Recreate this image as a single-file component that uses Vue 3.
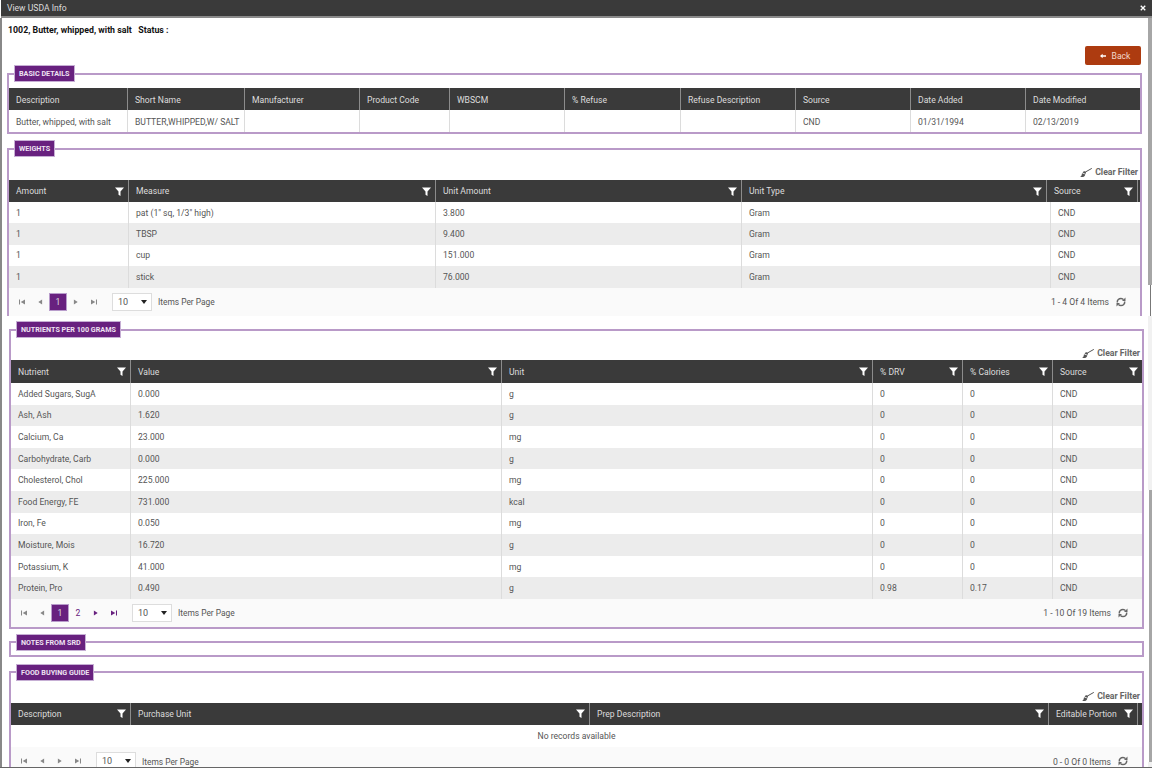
<script setup>
const panels = [
  {
    cls: 'panel-a',
    sections: [
      {
        title: 'BASIC DETAILS', cls: 'basic', filter: false,
        cols: [119, 117, 115, 90, 115, 116, 115, 115, 115, 113],
        head: ['Description', 'Short Name', 'Manufacturer', 'Product Code', 'WBSCM', '% Refuse', 'Refuse Description', 'Source', 'Date Added', 'Date Modified'],
        rows: [['Butter, whipped, with salt', 'BUTTER,WHIPPED,W/ SALT', '', '', '', '', '', 'CND', '01/31/1994', '02/13/2019']]
      },
      {
        title: 'WEIGHTS', cls: 'weights', filter: true, open: true, gutter: 2,
        cols: [120, 307, 306, 305, 91],
        rowCols: [120, 307, 306, 309, 89],
        head: ['Amount', 'Measure', 'Unit Amount', 'Unit Type', 'Source'],
        rows: [
          ['1', 'pat (1" sq, 1/3" high)', '3.800', 'Gram', 'CND'],
          ['1', 'TBSP', '9.400', 'Gram', 'CND'],
          ['1', 'cup', '151.000', 'Gram', 'CND'],
          ['1', 'stick', '76.000', 'Gram', 'CND']
        ],
        pager: { nums: [1], live: false, info: '1 - 4 Of 4 Items' }
      }
    ]
  },
  {
    cls: 'panel-b',
    sections: [
      {
        title: 'NUTRIENTS PER 100 GRAMS', cls: 'nutrients', filter: true,
        cols: [120, 371, 371, 90, 90, 89],
        head: ['Nutrient', 'Value', 'Unit', '% DRV', '% Calories', 'Source'],
        rows: [
          ['Added Sugars, SugA', '0.000', 'g', '0', '0', 'CND'],
          ['Ash, Ash', '1.620', 'g', '0', '0', 'CND'],
          ['Calcium, Ca', '23.000', 'mg', '0', '0', 'CND'],
          ['Carbohydrate, Carb', '0.000', 'g', '0', '0', 'CND'],
          ['Cholesterol, Chol', '225.000', 'mg', '0', '0', 'CND'],
          ['Food Energy, FE', '731.000', 'kcal', '0', '0', 'CND'],
          ['Iron, Fe', '0.050', 'mg', '0', '0', 'CND'],
          ['Moisture, Mois', '16.720', 'g', '0', '0', 'CND'],
          ['Potassium, K', '41.000', 'mg', '0', '0', 'CND'],
          ['Protein, Pro', '0.490', 'g', '0.98', '0.17', 'CND']
        ],
        pager: { nums: [1, 2], live: true, info: '1 - 10 Of 19 Items' }
      },
      { title: 'NOTES FROM SRD', cls: 'notes', empty: true },
      {
        title: 'FOOD BUYING GUIDE', cls: 'food', filter: true, open: true, gutter: 4,
        cols: [120, 459, 459, 89],
        head: ['Description', 'Purchase Unit', 'Prep Description', 'Editable Portion'],
        rows: [],
        none: 'No records available',
        pager: { nums: [], live: false, info: '0 - 0 Of 0 Items' }
      }
    ]
  }
]
const gridOf = (s) => ({ gridTemplateColumns: [...s.cols, ...(s.gutter ? [s.gutter] : [])].map((c) => c + 'px').join(' ') })
const rowGridOf = (s) => ({ gridTemplateColumns: (s.rowCols || s.cols).map((c) => c + 'px').join(' ') })
</script>

<template>
  <div class="screen">
    <header class="title">
      <span>View USDA Info</span>
      <svg class="close" viewBox="0 0 8 8" width="6" height="6"><path d="M1 1l6 6M7 1L1 7" stroke="#fff" stroke-width="1.8" /></svg>
    </header>
    <div class="work">
      <main class="main">
        <div v-for="panel in panels" :key="panel.cls" :class="['panel', panel.cls]">
          <template v-if="panel.cls === 'panel-a'">
            <div class="food-name">1002, Butter, whipped, with salt &nbsp; Status :</div>
            <div class="actions">
              <button class="back">
                <svg viewBox="0 0 8 8" width="6" height="6"><path d="M0 4l3.500-3v2H8v2H3.500v2z" fill="#fff" /></svg>
                <span>Back</span>
              </button>
            </div>
          </template>
          <fieldset v-for="s in panel.sections" :key="s.title" :class="['box', s.cls, { open: s.open }]">
            <legend>{{ s.title }}</legend>
            <template v-if="!s.empty">
              <div v-if="s.filter" class="clear">
                <svg viewBox="0 0 12 9" width="12" height="9">
                  <path d="M0 9c1.200-.5 1.800-2 2-3.800l3.400 1.400C4.900 8 4 9 3 9z" fill="#555" />
                  <path d="M2.600 4.600c.7-1.200 1.800-1.500 3-1l.5.500-.6 2z" fill="#555" />
                  <path d="M5.800 3.800L11.800.4" stroke="#555" stroke-width="1" fill="none" />
                </svg>
                <span>Clear Filter</span>
              </div>
              <div class="grid head" :style="gridOf(s)">
                <div v-for="h in s.head" :key="h" class="hcell">
                  <span>{{ h }}</span>
                  <svg v-if="s.filter" class="funnel" viewBox="0 0 9 9" width="9" height="9"><path d="M0 .5h9L5.500 4.500V9L3.500 7.800V4.500z" fill="#fff" /></svg>
                </div>
                <div v-if="s.gutter" class="hgutter"></div>
              </div>
              <div v-for="(r, i) in s.rows" :key="i" :class="['grid', 'row', { alt: i % 2 === 1 }]" :style="rowGridOf(s)">
                <div v-for="(c, j) in r" :key="j" class="cell">{{ c }}</div>
              </div>
              <div v-if="s.none" class="none">{{ s.none }}</div>
              <div v-if="s.pager" class="pager">
                <div class="nav">
                  <span class="pg">
                    <svg viewBox="0 0 7 7" width="6" height="6"><path d="M0 .5h1.200v6H0zM7 .5v6L2 3.500z" /></svg>
                  </span>
                  <span class="pg">
                    <svg viewBox="0 0 7 7" width="6" height="6"><path d="M6 .5v6L1.500 3.500z" /></svg>
                  </span>
                  <span v-for="n in s.pager.nums" :key="n" :class="['num', { on: n === 1 }]">{{ n }}</span>
                  <span :class="['pg', { live: s.pager.live }]">
                    <svg viewBox="0 0 7 7" width="6" height="6"><path d="M1 .5v6l4.500-3z" /></svg>
                  </span>
                  <span :class="['pg', { live: s.pager.live }]">
                    <svg viewBox="0 0 7 7" width="6" height="6"><path d="M0 .5v6l5-3zM5.800 .5H7v6H5.800z" /></svg>
                  </span>
                  <span class="select"><span>10</span><i></i></span>
                  <span class="per">Items Per Page</span>
                </div>
                <div class="info">
                  <span>{{ s.pager.info }}</span>
                  <svg viewBox="0 0 10 10" width="10" height="10" fill="none" stroke="#666" stroke-width="1.500">
                    <path d="M1.300 5.500C1 3 3 1.500 5 1.500c1 0 2 .4 2.500 1.200" />
                    <path d="M8.700 4.500C9 7 7 8.500 5 8.500c-1 0-2-.4-2.500-1.200" />
                    <path d="M9.500 .5v3.500H6z" fill="#666" stroke="none" />
                    <path d="M.5 9.500V6H4z" fill="#666" stroke="none" />
                  </svg>
                </div>
              </div>
            </template>
          </fieldset>
        </div>
      </main>
      <aside class="scroll">
        <div class="sb s1"></div>
        <div class="sb s2"></div>
        <div class="sb s3"></div>
        <div class="sb s4"></div>
        <div class="sb s5"></div>
      </aside>
    </div>
  </div>
</template>

<style>
html, body { margin: 0; background: #fff; }
</style>

<style scoped>
.screen {
  width: 1152px;
  height: 768px;
  box-sizing: border-box;
  border-bottom: 1px solid #666;
  font-family: Roboto, "Open Sans", sans-serif;
  font-size: 8.6px;
  color: #555;
  display: flex;
  flex-direction: column;
  overflow: hidden;
}
.title {
  height: 16px;
  flex: none;
  background: #3a3a3a;
  border-bottom: 2px solid #8a8a8a;
  margin-left: 1px;
  padding: 0 6px;
  color: #ddd;
  display: flex;
  justify-content: space-between;
  align-items: center;
}
.work {
  flex: 1;
  min-height: 0;
  display: flex;
  border-left: 2px solid #888;
}
.main { width: 1146px; overflow: hidden; flex: none; }
.panel-a { height: 298px; overflow: hidden; padding-left: 5px; box-sizing: border-box; }
.panel-b { padding: 5px 0 0 7px; }
.food-name {
  margin: 6px 0 0 1px;
  height: 13px;
  line-height: 13px;
  font-size: 8.800px;
  font-weight: 700;
  color: #111;
  white-space: pre;
}
.actions { width: 1134px; display: flex; justify-content: flex-end; margin-top: 9px; }
.back {
  width: 56px;
  height: 19px;
  padding: 0 0 0 4px;
  border: 0;
  border-radius: 2px;
  background: #ad3b10;
  color: #f3d9cc;
  font: inherit;
  display: flex;
  align-items: center;
  justify-content: center;
  gap: 6px;
}
.box {
  margin: 0 0 5px;
  padding: 0;
  min-width: 0;
  width: 1135px;
  box-sizing: border-box;
  border: 2px solid #b99ac8;
}
.panel-a .box { margin-bottom: 6px; }
.box.open { border-bottom: 0; margin-bottom: 0; }
legend {
  margin-left: 5px;
  height: 17px;
  box-sizing: border-box;
  padding: 0 4px;
  line-height: 15px;
  background: #68217f;
  border: 1px solid #c6afd4;
  color: #eee3f2;
  font-size: 7.200px;
  font-weight: 700;
  white-space: nowrap;
}
.basic .head { margin-top: 6px; }
.notes { padding-bottom: 4px; }
.food { margin-top: 7px; }
.clear {
  height: 23px;
  display: flex;
  justify-content: flex-end;
  align-items: flex-end;
  gap: 3px;
  padding: 0 2px 3px 0;
  box-sizing: border-box;
  font-weight: 700;
  font-size: 8.700px;
  color: #666;
}
.panel-b .clear { height: 22px; padding-bottom: 2px; }
.clear span { line-height: 10px; }
.grid { display: grid; }
.head { background: #3a3a3a; height: 22px; color: #ddd; }
.nutrients .head { height: 23px; }
.hcell {
  display: flex;
  align-items: center;
  justify-content: space-between;
  padding: 0 4px 0 7px;
  border-right: 1px solid #8c8c8c;
  min-width: 0;
  white-space: nowrap;
}
.basic .hcell { padding-top: 1px; }
.nutrients .hcell:last-child, .basic .hcell:last-child { border-right: 0; }
.row { height: 21.400px; }
.nutrients .row { height: 21.600px; }
.alt { background: #ececec; }
.cell {
  padding-left: 7px;
  border-right: 1px solid #dcdcdc;
  display: flex;
  align-items: center;
  white-space: nowrap;
  min-width: 0;
}
.basic .cell { padding-top: 1px; }
.cell:last-child { border-right: 0; }
.basic .row { height: 22px; }
.none { height: 22px; line-height: 23px; text-align: center; }
.pager {
  height: 28px;
  background: #fafafa;
  display: flex;
  align-items: center;
  justify-content: space-between;
  padding: 0 14px 0 4px;
}
.food .pager { height: 29px; }
.nav { display: flex; align-items: center; }
.info { display: flex; align-items: center; gap: 7px; }
.info span, .per { padding-top: 1px; }
.pg { width: 18px; height: 18px; display: flex; align-items: center; justify-content: center; fill: #888; }
.pg.live { fill: #68217f; }
.num { width: 18px; height: 18px; display: flex; align-items: center; justify-content: center; color: #68217f; box-sizing: border-box; }
.num.on { background: #68217f; color: #ddd; border: 1px solid #b89ccb; }
.select {
  width: 40px;
  height: 18px;
  box-sizing: border-box;
  margin-left: 9px;
  padding: 0 4px 0 5px;
  background: #fff;
  border: 1px solid #ddd;
  display: flex;
  align-items: center;
  justify-content: space-between;
  font-size: 9px;
}
.select i { border: 3px solid transparent; border-top: 4px solid #222; border-bottom: 0; }
.per { margin-left: 6px; font-size: 8.400px; }
.scroll { width: 4px; flex: none; display: flex; flex-direction: column; align-items: flex-end; }
.sb { width: 4px; }
.s1 { height: 267px; background: #a6a6a6; }
.s2 { height: 31px; width: 1px; background: #777; margin-right: 1px; }
.s3 { height: 174px; background: #f1f1f1; }
.s4 { height: 272px; width: 3px; background: #a6a6a6; }
.s5 { flex: 1; background: #f1f1f1; }
</style>
